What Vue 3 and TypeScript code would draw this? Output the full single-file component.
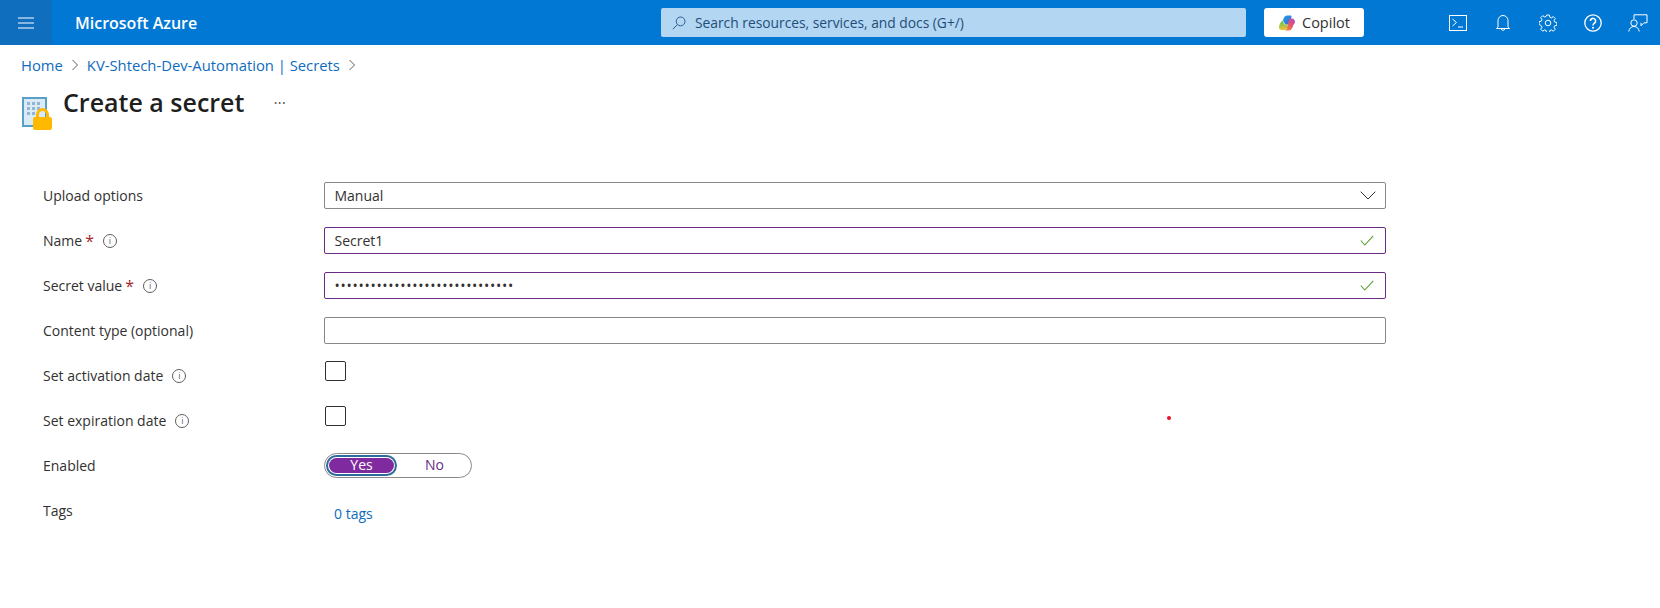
<script setup lang="ts">
import { ref } from 'vue'

const name = ref('Secret1')
const secret = ref('x'.repeat(30))
const contentType = ref('')
const enabled = ref(true)
const activation = ref(false)
const expiration = ref(false)
</script>

<template>
  <div class="page">
    <header class="topbar">
      <button class="burger" aria-label="Menu">
        <svg width="16" height="12" viewBox="0 0 16 12"><path d="M0 1h16M0 6h16M0 11h16" stroke="#fff" stroke-width="1" fill="none" /></svg>
      </button>
      <div class="brand">Microsoft Azure</div>
      <div class="search">
        <svg width="14" height="14" viewBox="0 0 14 14" fill="none" stroke="#2b5f8f" stroke-width="1"><circle cx="8.6" cy="5.4" r="4.4" /><path d="M5.4 8.6L.8 13.2" /></svg>
        <span>Search resources, services, and docs (G+/)</span>
      </div>
      <button class="copilot">
        <svg width="18" height="18" viewBox="0 0 18 18">
          <defs>
            <linearGradient id="cpA" x1="0" y1="0" x2="1" y2="1"><stop offset="0" stop-color="#1fa3e8" /><stop offset="1" stop-color="#3b62d8" /></linearGradient>
            <linearGradient id="cpB" x1="0" y1="1" x2="1" y2="0"><stop offset="0" stop-color="#f0a030" /><stop offset=".55" stop-color="#e8506e" /><stop offset="1" stop-color="#a84fd0" /></linearGradient>
            <linearGradient id="cpC" x1="0" y1="0" x2="0" y2="1"><stop offset="0" stop-color="#4fc45a" /><stop offset="1" stop-color="#f2c230" /></linearGradient>
          </defs>
          <path d="M5 6.500C5.600 3.400 7 1.500 9.500 1.500h2.600c1 0 1.600.7 1.300 1.700L11 10.500H7.200z" fill="url(#cpA)" />
          <path d="M4.600 6.200C2.600 8 1 11 1 13.200c0 1.800 1 2.800 2.600 2.800h2.600c1.400 0 2.200-.8 2.600-2l.9-3.500H6.400z" fill="url(#cpC)" />
          <path d="M11.600 4.400L8.800 14c-.4 1.200-1.200 2.500-2.600 2.500h4.400c2.400 0 3.600-2 4.400-4.600.5-1.600 2-2.400 2-4.100 0-2-1.400-3.400-3.200-3.400z" fill="url(#cpB)" />
        </svg>
        <span>Copilot</span>
      </button>
      <nav class="actions">
        <button class="action" aria-label="Cloud Shell">
          <svg width="18" height="16" viewBox="0 0 18 16" fill="none" stroke="#fff" stroke-width="1"><rect x=".5" y=".5" width="17" height="15" /><path d="M3.500 4l4 3.500-4 3.500M9 12h5" /></svg>
        </button>
        <button class="action" aria-label="Notifications">
          <svg width="16" height="18" viewBox="0 0 16 18" fill="none" stroke="#fff" stroke-width="1"><path d="M3 13V6.500a5 5 0 0 1 10 0V13l1.500 1.500h-13zM6.200 15a1.900 1.900 0 0 0 3.600 0" /></svg>
        </button>
        <button class="action" aria-label="Settings">
          <svg width="18" height="18" viewBox="0 0 18 18" fill="none" stroke="#fff" stroke-width="1"><circle cx="9" cy="9" r="2.800" /><path d="M7.600 1h2.800l.5 2.300 1.400.6 2-1.300 2 2-1.300 2 .6 1.400 2.300.5v2.800l-2.300.5-.6 1.400 1.300 2-2 2-2-1.300-1.400.6-.5 2.300H7.600l-.5-2.300-1.400-.6-2 1.300-2-2 1.300-2-.6-1.400L.1 10.400V7.600l2.300-.5.6-1.400-1.300-2 2-2 2 1.300 1.400-.6z" /></svg>
        </button>
        <button class="action" aria-label="Help">
          <svg width="18" height="18" viewBox="0 0 18 18" fill="none" stroke="#fff"><circle cx="9" cy="9" r="8.200" stroke-width="1.300" /><path d="M6.400 7a2.600 2.600 0 1 1 4.200 2c-1 .8-1.600 1.200-1.600 2.400" stroke-width="1.600" /><circle cx="9" cy="13.700" r="1" fill="#fff" stroke="none" /></svg>
        </button>
        <button class="action" aria-label="Feedback">
          <svg width="20" height="18" viewBox="0 0 20 18" fill="none" stroke="#fff" stroke-width="1"><path d="M6 5V.8h13v8h-3l-3 3V8.800" /><circle cx="6" cy="9" r="3.200" /><path d="M.8 17.500c.3-3 2.400-5 5.200-5s4.900 2 5.200 5" /></svg>
        </button>
      </nav>
    </header>

    <nav class="crumbs">
      <a>Home</a>
      <svg width="8" height="12" viewBox="0 0 8 12" fill="none" stroke="#605e5c"><path d="M1.500 1l5 5-5 5" /></svg>
      <a>KV-Shtech-Dev-Automation | Secrets</a>
      <svg width="8" height="12" viewBox="0 0 8 12" fill="none" stroke="#605e5c"><path d="M1.500 1l5 5-5 5" /></svg>
    </nav>

    <div class="title-row">
      <svg class="kv-icon" width="32" height="34" viewBox="0 0 32 34">
        <rect x="1" y="1" width="23" height="28" fill="#dbeaf5" stroke="#59a0c9" stroke-width="2" />
        <g fill="#8fb8d6">
          <rect x="5" y="5" width="3" height="3" /><rect x="10" y="5" width="3" height="3" /><rect x="15" y="5" width="3" height="3" />
          <rect x="5" y="10" width="3" height="3" /><rect x="10" y="10" width="3" height="3" /><rect x="15" y="10" width="3" height="3" />
          <rect x="5" y="15" width="3" height="3" /><rect x="10" y="15" width="3" height="3" />
        </g>
        <path d="M15.500 21v-3.500a5 5 0 0 1 10 0V21" fill="none" stroke="#ffb900" stroke-width="3" />
        <rect x="11" y="20" width="19" height="13" rx="2" fill="#ffb900" />
      </svg>
      <h1>Create a secret</h1>
      <span class="more">···</span>
    </div>

    <form class="form" @submit.prevent>
      <label class="lbl">Upload options</label>
      <div class="ctl">
        <div class="field select">
          <span>Manual</span>
          <svg width="16" height="9" viewBox="0 0 16 9" fill="none" stroke="#323130"><path d="M.7.7L8 8l7.300-7.300" /></svg>
        </div>
      </div>

      <label class="lbl">Name <em>*</em><i class="info">i</i></label>
      <div class="ctl">
        <div class="field valid">
          <input v-model="name" />
          <svg width="14" height="11" viewBox="0 0 14 11" fill="none" stroke="#5c9e31" stroke-width="1.100"><path d="M.8 5.500l4 4.500L13.200.8" /></svg>
        </div>
      </div>

      <label class="lbl">Secret value <em>*</em><i class="info">i</i></label>
      <div class="ctl">
        <div class="field valid">
          <input v-model="secret" type="password" />
          <svg width="14" height="11" viewBox="0 0 14 11" fill="none" stroke="#5c9e31" stroke-width="1.100"><path d="M.8 5.500l4 4.500L13.200.8" /></svg>
        </div>
      </div>

      <label class="lbl">Content type (optional)</label>
      <div class="ctl">
        <div class="field"><input v-model="contentType" /></div>
      </div>

      <label class="lbl">Set activation date<i class="info">i</i></label>
      <div class="ctl">
        <button type="button" class="check" :aria-pressed="activation" @click="activation = !activation"></button>
      </div>

      <label class="lbl">Set expiration date<i class="info">i</i></label>
      <div class="ctl">
        <button type="button" class="check" :aria-pressed="expiration" @click="expiration = !expiration"></button>
      </div>

      <label class="lbl">Enabled</label>
      <div class="ctl">
        <div class="toggle">
          <button type="button" :class="{ on: enabled }" @click="enabled = true">Yes</button>
          <button type="button" :class="{ on: !enabled }" @click="enabled = false">No</button>
        </div>
      </div>

      <label class="lbl">Tags</label>
      <div class="ctl">
        <a class="tags">0 tags</a>
      </div>
    </form>

    <span class="red-dot"></span>
  </div>
</template>

<style>
html, body { margin: 0; background: #fff; }
</style>

<style scoped>
.page{position:relative;width:1660px;height:608px;overflow:hidden;background:#fff;color:#323130;font-family:"Open Sans","Noto Sans","Liberation Sans",sans-serif;font-size:14px}
button{font-family:inherit;border:0;background:none;padding:0;cursor:pointer}
.topbar{display:flex;align-items:center;height:45px;background:#0078d4}
.burger{width:52px;height:45px;background:#106ebe;display:flex;align-items:center;justify-content:center}
.brand{width:586px;padding-left:23px;color:#fff;font-weight:600;font-size:16px}
.search{width:585px;height:29px;box-sizing:border-box;display:flex;align-items:center;gap:9px;padding-left:11px;background:#b3d6f2;border-radius:2px;color:#1f4e79;font-size:13.800px}
.copilot{margin-left:18px;width:100px;height:29px;background:#fff;border-radius:3px;display:flex;align-items:center;justify-content:center;gap:6px;color:#323130;font-size:14.500px}
.actions{margin-left:auto;display:flex}
.action{width:45px;height:45px;display:flex;align-items:center;justify-content:center}
.crumbs{display:flex;align-items:center;gap:8px;height:40px;padding-left:21px;color:#0f6cbd;font-size:14.800px}
.crumbs a{cursor:pointer}
.title-row{display:flex;align-items:flex-start;height:45px;padding-left:22px}
.kv-icon{margin-top:12px;flex:none}
h1{margin:0 0 0 9px;font-size:25px;font-weight:600;color:#201f1e;line-height:34px}
.more{margin:0 0 0 29px;line-height:36px;font-size:16px;color:#605e5c}
.form{display:grid;grid-template-columns:281px 1062px;grid-auto-rows:45px;margin:43px 0 0 43px}
.lbl{display:flex;align-items:center;color:#323130}
.lbl em{color:#a4262c;font-style:normal;margin-left:3px;font-size:16px}
.info{display:inline-flex;align-items:center;justify-content:center;box-sizing:border-box;width:14px;height:14px;margin-left:9px;border:1px solid #605e5c;border-radius:50%;font-style:normal;font-size:9px;line-height:1;color:#605e5c}
.ctl{display:flex;align-items:center}
.field{box-sizing:border-box;width:100%;height:27px;display:flex;align-items:center;justify-content:space-between;padding:0 11px 0 9.500px;border:1px solid #8a8886;border-radius:2px}
.field input{flex:1;min-width:0;border:0;outline:0;padding:0;background:none;font:inherit;color:#323130}
.field.valid{border-color:#6b2c85}
.field input[type=password]{letter-spacing:.72px}
.select{padding-right:9px}
.check{width:21px;height:20px;margin:-9px 0 0 1px;box-sizing:border-box;border:1px solid #323130;border-radius:2px;background:#fff}
.toggle{box-sizing:border-box;width:148px;height:25px;display:flex;align-items:stretch;border:1px solid #8a8886;border-radius:13px;margin-top:-1px}
.toggle button{flex:1;color:#6b2c85;font-size:14px;line-height:14px;border-radius:12px;margin:4px}
.toggle button:first-child{flex:none;width:65px}
.toggle .on{background:#7f2a9e;color:#fff;box-shadow:0 0 0 1px #fff,0 0 0 3px #2f6b9a}
.tags{margin:5px 0 0 10px;color:#0f6cbd;cursor:pointer}
.red-dot{position:absolute;left:1167px;top:416px;width:4px;height:4px;border-radius:50%;background:#e81123}
</style>
